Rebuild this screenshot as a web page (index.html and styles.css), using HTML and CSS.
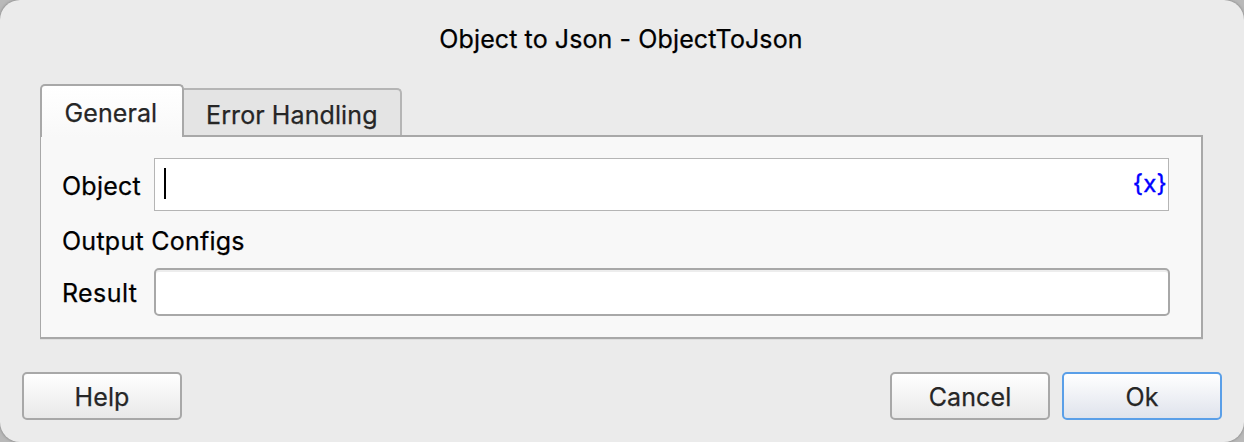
FILE: index.html
```
<!DOCTYPE html>
<html lang="en">
<head>
<meta charset="utf-8">
<title>Object to Json - ObjectToJson</title>
<link rel="stylesheet" href="styles.css">
</head>
<body>
<main class="dialog">
  <h1 class="title"><span>Object to Json - ObjectToJson</span></h1>
  <div class="tabs">
    <div class="tab tab-active"><span>General</span></div>
    <div class="tab tab-idle"><span>Error Handling</span></div>
  </div>
  <section class="panel">
    <div class="row row-object">
      <span class="label">Object</span>
      <div class="field field-object"><i class="caret"></i><span class="variable">{x}</span></div>
    </div>
    <div class="heading"><span>Output Configs</span></div>
    <div class="row row-result">
      <span class="label label-result">Result</span>
      <div class="field field-result"></div>
    </div>
  </section>
  <footer class="actions">
    <button class="button button-help">Help</button>
    <button class="button">Cancel</button>
    <button class="button button-primary">Ok</button>
  </footer>
</main>
</body>
</html>
```
FILE: styles.css
```
* { box-sizing: border-box; }
body {
  margin: 0;
  background: #b9b9b9;
  font-family: Inter, "Liberation Sans", sans-serif;
  font-size: 25px;
  line-height: 30px;
  letter-spacing: 0.1px;
  -webkit-text-stroke: 0.25px currentColor;
  color: #000;
}
.dialog {
  display: flex;
  flex-direction: column;
  width: 1244px;
  height: 442px;
  background: #ebebeb;
  border-radius: 20px;
  box-shadow: 0 0 3px #777;
  overflow: hidden;
}
.title {
  margin: 0;
  height: 84px;
  padding-top: 24px;
  padding-right: 2px;
  font-size: inherit;
  font-weight: 400;
  text-align: center;
}
.tabs {
  display: flex;
  align-items: flex-end;
  height: 53px;
  margin-left: 40px;
  z-index: 1;
}
.tab {
  border: 2px solid #a8a8a8;
  border-bottom: 0;
  color: #262626;
}
.tab-active {
  width: 144px;
  height: 53px;
  padding: 12px 0 0 22.5px;
  border-radius: 5px 5px 0 0;
  background: linear-gradient(#fff, #f8f8f8);
}
.tab-idle {
  width: 218px;
  height: 47px;
  margin-bottom: 2px;
  padding: 10px 0 0 22px;
  border-color: #b5b5b5;
  border-left: 0;
  border-radius: 0 5px 0 0;
  background: #e4e4e4;
}
.panel {
  width: 1163px;
  height: 204px;
  margin: -2px 0 0 40px;
  padding: 21px 0 0 21px;
  border: 2px solid #a8a8a8;
  border-left-width: 1px;
  background: #f8f8f8;
  box-shadow: 0 1px 0 #dedede;
  letter-spacing: 0.25px;
}
.row { display: flex; align-items: center; }
.label { width: 92px; padding-top: 2px; }
.label-result { padding-top: 1px; letter-spacing: 0.4px; }
.field { background: #fff; }
.field-object {
  display: flex;
  align-items: center;
  justify-content: space-between;
  width: 1015px;
  height: 53px;
  padding: 0 1px 2px 9px;
  border: 1px solid #b5b5b5;
}
.caret { width: 2px; height: 31px; background: #000; }
.variable { color: #00f; font-size: 24px; -webkit-text-stroke-width: 0.4px; }
.heading { height: 57px; padding-top: 15px; }
.field-result {
  width: 1016px;
  height: 48px;
  border: 2px solid #a8a8a8;
  border-radius: 5px;
  box-shadow: inset 0 2px 0 #ededed;
}
.actions {
  display: flex;
  gap: 12px;
  padding: 33px 22px 0;
}
.button {
  width: 160px;
  height: 48px;
  padding: 2px 0 0;
  border: 2px solid #a8a8a8;
  border-radius: 5px;
  background: linear-gradient(#fff, #e9e9e9);
  color: #262626;
  font: inherit;
  letter-spacing: inherit;
}
.button-help { margin-right: auto; }
.button-primary {
  border-color: #5a9fe8;
  background: linear-gradient(#fff, #dfe3ec);
}
```
